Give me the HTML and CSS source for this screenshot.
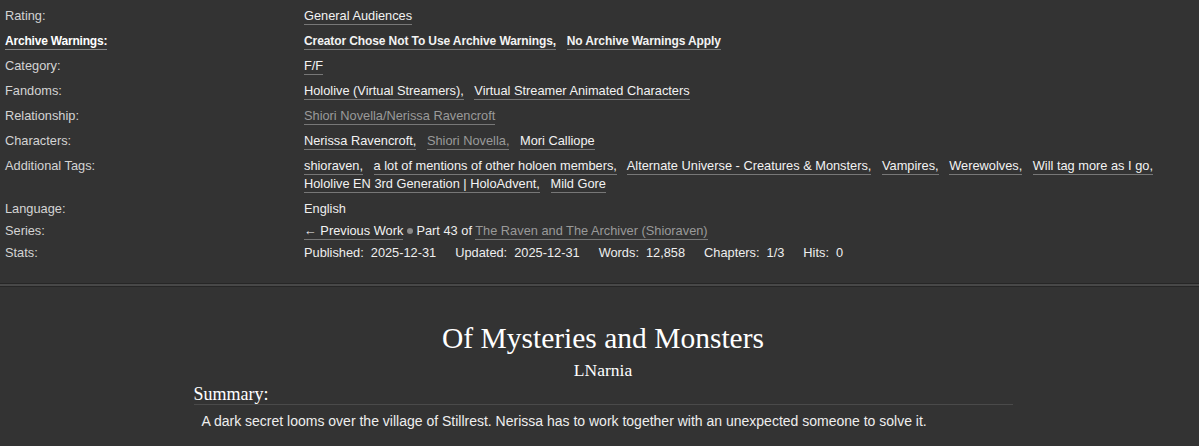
FILE: index.html
```html
<!DOCTYPE html>
<html>
<head>
<meta charset="utf-8">
<link rel="stylesheet" href="styles.css">
</head>
<body>
<div class="page">
  <dl class="meta">
    <dt>Rating:</dt>
    <dd class="tags"><a class="tag">General Audiences</a></dd>

    <dt><a class="help">Archive Warnings:</a></dt>
    <dd class="tags bold"><a class="tag">Creator Chose Not To Use Archive Warnings,</a> <a class="tag">No Archive Warnings Apply</a></dd>

    <dt>Category:</dt>
    <dd class="tags"><a class="tag">F/F</a></dd>

    <dt>Fandoms:</dt>
    <dd class="tags"><a class="tag">Hololive (Virtual Streamers),</a> <a class="tag">Virtual Streamer Animated Characters</a></dd>

    <dt>Relationship:</dt>
    <dd class="tags"><a class="tag visited">Shiori Novella/Nerissa Ravencroft</a></dd>

    <dt>Characters:</dt>
    <dd class="tags"><a class="tag">Nerissa Ravencroft,</a> <a class="tag visited">Shiori Novella,</a> <a class="tag">Mori Calliope</a></dd>

    <dt>Additional Tags:</dt>
    <dd class="tags"><a class="tag">shioraven,</a> <a class="tag">a lot of mentions of other holoen members,</a> <a class="tag">Alternate Universe - Creatures &amp; Monsters,</a> <a class="tag">Vampires,</a> <a class="tag">Werewolves,</a> <a class="tag">Will tag more as I go,</a> <a class="tag">Hololive EN 3rd Generation | HoloAdvent,</a> <a class="tag">Mild Gore</a></dd>

    <dt>Language:</dt>
    <dd class="plain">English</dd>

    <dt>Series:</dt>
    <dd class="plain"><a class="tag">← Previous Work</a> <span class="dot"></span> Part 43 of <a class="tag visited">The Raven and The Archiver (Shioraven)</a></dd>

    <dt>Stats:</dt>
    <dd class="plain stats"><span>Published:</span><span class="v">2025-12-31</span><span>Updated:</span><span class="v">2025-12-31</span><span>Words:</span><span class="v">12,858</span><span>Chapters:</span><span class="v">1/3</span><span>Hits:</span><span class="v">0</span></dd>
  </dl>

  <div class="divider"></div>

  <div class="preface">
    <h2 class="title">Of Mysteries and Monsters</h2>
    <h3 class="byline">LNarnia</h3>
    <div class="summary">
      <h3 class="heading">Summary:</h3>
      <p class="summary-text">A dark secret looms over the village of Stillrest. Nerissa has to work together with an unexpected someone to solve it.</p>
    </div>
  </div>
</div>
</body>
</html>
```

FILE: styles.css
```css
html, body {
  margin: 0;
  padding: 0;
  background: #333333;
}

.page {
  font-family: "Liberation Sans", Arial, sans-serif;
  font-size: 12.8px;
  color: #dddddd;
}

.meta {
  display: grid;
  grid-template-columns: 299px 1fr;
  margin: 0;
  padding: 7px 5px 0 5px;
}

.meta dt {
  margin: 0;
  line-height: 18px;
  color: #d4d4d4;
}

.meta dd {
  margin: 0;
  line-height: 18px;
  color: #eeeeee;
}

.meta dd.tags {
  padding-bottom: 7px;
}

.meta dd.plain {
  padding-bottom: 4px;
}

.help {
  font-weight: bold;
  font-size: 12px;
  letter-spacing: -0.2px;
  color: #ffffff;
  border-bottom: 1px solid #888888;
  padding-bottom: 1px;
}

.tag {
  color: #f2f2f2;
  border-bottom: 1px solid #777777;
  padding-bottom: 1px;
  margin-right: 7px;
  white-space: nowrap;
}

.tags.bold .tag {
  font-weight: bold;
  font-size: 12px;
  letter-spacing: -0.1px;
}

.tag.visited {
  color: #9a9a9a;
}

.plain .tag {
  margin-right: 0;
}

.dot {
  display: inline-block;
  width: 6px;
  height: 6px;
  border-radius: 50%;
  background: #8a8a8a;
  vertical-align: 1px;
}

.stats span {
  margin-right: 7px;
}

.stats span.v {
  margin-right: 19px;
}

.divider {
  margin-top: 17px;
  height: 2px;
  background: #484848;
  border-top: 1px solid #262626;
  border-bottom: 1px solid #262626;
}

.preface {
  width: 819px;
  margin-left: calc(50% - 406px);
}

.title {
  font-family: "Liberation Serif", "Times New Roman", serif;
  font-weight: normal;
  font-size: 29.5px;
  color: #ffffff;
  text-align: center;
  margin: 34px 0 0 0;
  line-height: 34px;
}

.byline {
  font-family: "Liberation Serif", "Times New Roman", serif;
  font-weight: normal;
  font-size: 17.5px;
  color: #ffffff;
  text-align: center;
  margin: 5px 0 0 0;
  line-height: 20px;
}

.heading {
  font-family: "Liberation Serif", "Times New Roman", serif;
  font-weight: normal;
  font-size: 18px;
  color: #ffffff;
  margin: 5px 0 0 0;
  line-height: 19px;
  border-bottom: 1px solid #4a4a4a;
}

.summary-text {
  margin: 7px 0 0 8px;
  font-size: 14px;
  line-height: 18px;
  color: #eeeeee;
}
```
